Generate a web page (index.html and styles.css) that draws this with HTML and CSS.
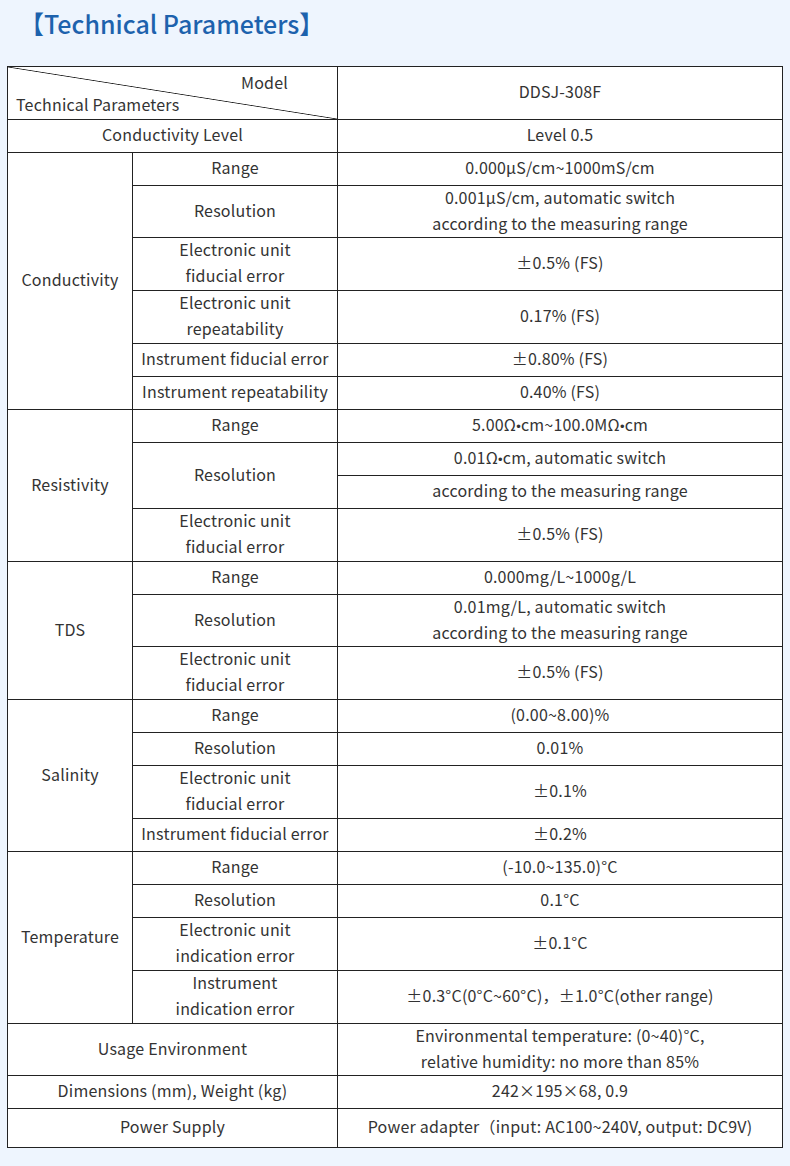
FILE: index.html
```html
<!DOCTYPE html>
<html lang="en">
<head>
<meta charset="utf-8">
<title>Technical Parameters</title>
<link rel="stylesheet" href="styles.css">
</head>
<body>
<h2 class="title">【Technical Parameters】</h2>
<div class="spec-table">
  <div class="cell head span-c2"><span class="head-model">Model</span><span class="head-param">Technical Parameters</span></div>
  <div class="cell">DDSJ-308F</div>

  <div class="cell span-c2">Conductivity Level</div>
  <div class="cell">Level 0.5</div>

  <div class="cell span-r6">Conductivity</div>
  <div class="cell">Range</div>
  <div class="cell">0.000μS/cm~1000mS/cm</div>
  <div class="cell">Resolution</div>
  <div class="cell">0.001μS/cm, automatic switch<br>according to the measuring range</div>
  <div class="cell">Electronic unit<br>fiducial error</div>
  <div class="cell">±0.5% (FS)</div>
  <div class="cell">Electronic unit<br>repeatability</div>
  <div class="cell">0.17% (FS)</div>
  <div class="cell">Instrument fiducial error</div>
  <div class="cell">±0.80% (FS)</div>
  <div class="cell">Instrument repeatability</div>
  <div class="cell">0.40% (FS)</div>

  <div class="cell span-r4">Resistivity</div>
  <div class="cell">Range</div>
  <div class="cell"><span>5.00Ω<span class="dot">•</span>cm~100.0MΩ<span class="dot">•</span>cm</span></div>
  <div class="cell span-r2">Resolution</div>
  <div class="cell"><span>0.01Ω<span class="dot">•</span>cm, automatic switch</span></div>
  <div class="cell">according to the measuring range</div>
  <div class="cell">Electronic unit<br>fiducial error</div>
  <div class="cell">±0.5% (FS)</div>

  <div class="cell span-r3">TDS</div>
  <div class="cell">Range</div>
  <div class="cell">0.000mg/L~1000g/L</div>
  <div class="cell">Resolution</div>
  <div class="cell">0.01mg/L, automatic switch<br>according to the measuring range</div>
  <div class="cell">Electronic unit<br>fiducial error</div>
  <div class="cell">±0.5% (FS)</div>

  <div class="cell span-r4">Salinity</div>
  <div class="cell">Range</div>
  <div class="cell">(0.00~8.00)%</div>
  <div class="cell">Resolution</div>
  <div class="cell">0.01%</div>
  <div class="cell">Electronic unit<br>fiducial error</div>
  <div class="cell">±0.1%</div>
  <div class="cell">Instrument fiducial error</div>
  <div class="cell">±0.2%</div>

  <div class="cell span-r4">Temperature</div>
  <div class="cell">Range</div>
  <div class="cell">(-10.0~135.0)°C</div>
  <div class="cell">Resolution</div>
  <div class="cell">0.1°C</div>
  <div class="cell">Electronic unit<br>indication error</div>
  <div class="cell">±0.1°C</div>
  <div class="cell">Instrument<br>indication error</div>
  <div class="cell">±0.3°C(0°C~60°C)，±1.0°C(other range)</div>

  <div class="cell span-c2">Usage Environment</div>
  <div class="cell">Environmental temperature: (0~40)°C,<br>relative humidity: no more than 85%</div>

  <div class="cell span-c2">Dimensions (mm), Weight (kg)</div>
  <div class="cell">242×195×68, 0.9</div>

  <div class="cell span-c2">Power Supply</div>
  <div class="cell">Power adapter（input: AC100~240V, output: DC9V)</div>
</div>
</body>
</html>
```
FILE: styles.css
```css
html, body {
  margin: 0;
  padding: 0;
  background: #eef5fe;
}

body {
  font-family: "Noto Sans CJK SC", "Noto Sans", sans-serif;
  color: #333;
  font-size: 16px;
}

.title {
  margin: 0;
  height: 66px;
  padding: 4px 0 0 19px;
  box-sizing: border-box;
  font-size: 25px;
  font-weight: 500;
  line-height: 38px;
  color: #1d62ad;
}

.spec-table {
  margin-left: 7px;
  width: 776px;
  box-sizing: border-box;
  display: grid;
  grid-template-columns: 125px 205px 445px;
  grid-template-rows: 53px 33px 33px 52px 53px 53px 33px 33px 33px 33px 33px 53px 33px 52px 53px 33px 33px 53px 33px 33px 33px 53px 53px 52px 33px 39px;
  border-top: 1px solid #222;
  border-left: 1px solid #222;
  background: #fff;
}

.cell {
  border-right: 1px solid #222;
  border-bottom: 1px solid #222;
  display: flex;
  align-items: center;
  justify-content: center;
  text-align: center;
  line-height: 26px;
  padding: 0 2px 4px;
  letter-spacing: 0.2px;
  white-space: nowrap;
}

.dot {
  font-family: "Liberation Sans", sans-serif;
  font-size: 13px;
  line-height: 1;
}

.span-c2 { grid-column: span 2; }
.span-r2 { grid-row: span 2; }
.span-r3 { grid-row: span 3; }
.span-r4 { grid-row: span 4; }
.span-r6 { grid-row: span 6; }

.head {
  flex-direction: column;
  align-items: stretch;
  justify-content: space-between;
  padding: 4px 0 5px 0;
  line-height: 22px;
  background: linear-gradient(to top right, transparent calc(50% - 0.8px), #222 50%, transparent calc(50% + 0.8px));
}

.head-model {
  text-align: right;
  padding-right: 49px;
}

.head-param {
  text-align: left;
  padding-left: 8px;
}
```
